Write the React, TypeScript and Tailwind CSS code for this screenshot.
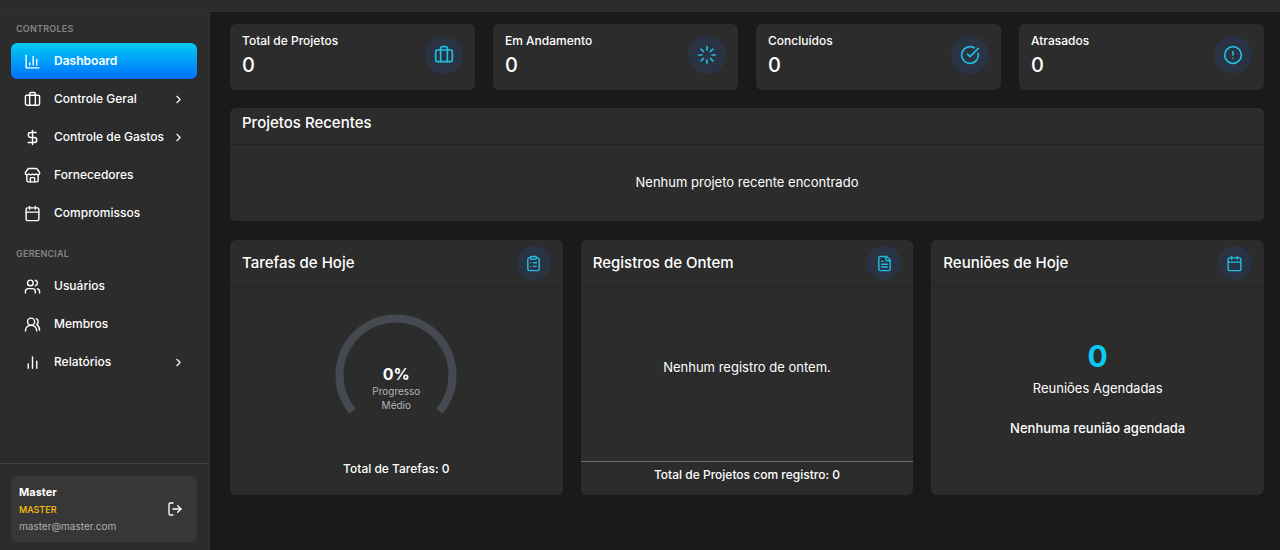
import type { ReactNode } from 'react';
import {
  Briefcase,
  Calendar,
  ChevronRight,
  CircleAlert,
  CircleCheckBig,
  ClipboardList,
  DollarSign,
  FileText,
  Loader,
  LogOut,
  Store,
  Users,
  UsersRound,
} from 'lucide-react';
import type { LucideIcon } from 'lucide-react';

type IconProps = { size?: number };

function StrokeIcon({ size = 17, children }: IconProps & { children: ReactNode }) {
  return (
    <svg
      width={size}
      height={size}
      viewBox="0 0 24 24"
      fill="none"
      stroke="currentColor"
      strokeWidth="2"
      strokeLinecap="round"
      strokeLinejoin="round"
    >
      {children}
    </svg>
  );
}

function ChartAxes(props: IconProps) {
  return (
    <StrokeIcon {...props}>
      <path d="M3 3v18h18M8 17v-3M13 17V5M18 17V9" />
    </StrokeIcon>
  );
}

function ChartBars(props: IconProps) {
  return (
    <StrokeIcon {...props}>
      <path d="M6 20v-6M12 20V4M18 20V10" />
    </StrokeIcon>
  );
}

type NavEntry = {
  label: string;
  icon: LucideIcon | typeof ChartAxes;
  active?: boolean;
  expandable?: boolean;
};

const controles: NavEntry[] = [
  { label: 'Dashboard', icon: ChartAxes, active: true },
  { label: 'Controle Geral', icon: Briefcase, expandable: true },
  { label: 'Controle de Gastos', icon: DollarSign, expandable: true },
  { label: 'Fornecedores', icon: Store },
  { label: 'Compromissos', icon: Calendar },
];

const gerencial: NavEntry[] = [
  { label: 'Usuários', icon: Users },
  { label: 'Membros', icon: UsersRound },
  { label: 'Relatórios', icon: ChartBars, expandable: true },
];

const stats = [
  { label: 'Total de Projetos', value: 0, icon: Briefcase },
  { label: 'Em Andamento', value: 0, icon: Loader },
  { label: 'Concluídos', value: 0, icon: CircleCheckBig },
  { label: 'Atrasados', value: 0, icon: CircleAlert },
];

const rowBase = 'flex h-9 w-full items-center rounded-md pl-[13px] pr-3 text-left text-[12px] text-white';

function NavItem({ label, icon: Icon, active, expandable }: NavEntry) {
  const content = (
    <>
      <Icon size={17} />
      <span className="ml-[13px] flex-1 whitespace-nowrap">{label}</span>
      {expandable && <ChevronRight size={13} />}
    </>
  );

  return (
    <li>
      {expandable ? (
        <button type="button" aria-expanded={false} className={`${rowBase} font-medium`}>
          {content}
        </button>
      ) : (
        <a
          href="#"
          aria-current={active ? 'page' : undefined}
          className={`${rowBase} ${active ? 'bg-linear-to-b from-[#0dcaf0] to-[#0d6efd] font-semibold' : 'font-medium'}`}
        >
          {content}
        </a>
      )}
    </li>
  );
}

function NavGroup({ title, items }: { title: string; items: NavEntry[] }) {
  return (
    <section>
      <h2 className="px-[5px] text-[9px] leading-3 font-semibold tracking-wide text-[#858585]">{title}</h2>
      <ul className="mt-2 flex flex-col gap-0.5">
        {items.map((item) => (
          <NavItem key={item.label} {...item} />
        ))}
      </ul>
    </section>
  );
}

function Sidebar() {
  return (
    <aside className="flex w-[210px] shrink-0 flex-col border-r border-[#303030] bg-[#2c2c2c]">
      <nav className="flex flex-1 flex-col gap-[17px] pt-[11px] pr-3 pl-[11px]">
        <NavGroup title="CONTROLES" items={controles} />
        <NavGroup title="GERENCIAL" items={gerencial} />
      </nav>
      <div className="border-t border-[#414141] pt-3 pr-3 pb-2 pl-[11px]">
        <div className="flex h-[66px] items-center justify-between rounded-md bg-[#373737] pr-3.5 pl-2">
          <div>
            <p className="text-[11px] leading-[17px] font-bold text-white">Master</p>
            <p className="text-[9px] leading-[17px] font-medium text-[#ffc107]">MASTER</p>
            <p className="text-[10px] leading-4 text-[#b0b0b0]">master@master.com</p>
          </div>
          <button type="button" aria-label="Sair" className="text-white">
            <LogOut size={16} />
          </button>
        </div>
      </div>
    </aside>
  );
}

function Card({ title, icon: Icon, children }: { title: string; icon: LucideIcon; children: ReactNode }) {
  return (
    <section className="flex h-[255px] flex-col rounded-md bg-[#2c2c2c]">
      <header className="flex h-[47px] shrink-0 items-center justify-between border-b border-[#242424] px-3">
        <h2 className="text-[15px] font-medium">{title}</h2>
        <span className="flex size-[34px] items-center justify-center rounded-full bg-[#293343] text-[#20bde0]">
          <Icon size={17} />
        </span>
      </header>
      {children}
    </section>
  );
}

function Gauge() {
  return (
    <div className="grid place-items-center">
      <svg width="122" height="122" viewBox="0 0 122 122" className="col-start-1 row-start-1">
        <path d="M17.7 97.3A56.5 56.5 0 1 1 104.3 97.3" fill="none" stroke="#454a51" strokeWidth="8" />
      </svg>
      <div className="col-start-1 row-start-1 pt-[26px] text-center">
        <p className="text-base leading-5 font-bold">0%</p>
        <p className="text-[10px] leading-[14px] text-[#adb5bd]">
          Progresso
          <br />
          Médio
        </p>
      </div>
    </div>
  );
}

export default function App() {
  return (
    <div className="flex h-screen flex-col bg-[#1a1a1a] font-[Inter,'Open_Sans',sans-serif] text-white">
      <div className="h-3 shrink-0 border-b border-[#303030] bg-[#2c2c2c]" />
      <div className="flex min-h-0 flex-1">
        <Sidebar />

        <main className="min-w-0 flex-1 pt-3 pr-4 pl-5">
          <div className="grid grid-cols-4 gap-[18px]">
            {stats.map(({ label, value, icon: Icon }) => (
              <section
                key={label}
                className="flex h-[66px] items-center justify-between rounded-md bg-[#2c2c2c] px-3 pb-1"
              >
                <div>
                  <h2 className="text-[12px] leading-5 font-medium">{label}</h2>
                  <p className="text-xl leading-7 font-medium">{value}</p>
                </div>
                <span className="flex size-[38px] items-center justify-center rounded-full bg-[#293343] text-[#20bde0]">
                  <Icon size={20} />
                </span>
              </section>
            ))}
          </div>

          <section className="mt-[18px] rounded-md bg-[#2c2c2c]">
            <header className="h-[37px] border-b border-[#242424] px-3 pt-[5px]">
              <h2 className="text-[15px] leading-5 font-medium">Projetos Recentes</h2>
            </header>
            <p className="flex h-[76px] items-center justify-center text-[13px]">Nenhum projeto recente encontrado</p>
          </section>

          <div className="mt-[19px] grid grid-cols-3 gap-[18px]">
            <Card title="Tarefas de Hoje" icon={ClipboardList}>
              <div className="flex flex-1 flex-col items-center justify-between pt-[27px] pb-4">
                <Gauge />
                <p className="text-[12px] leading-5 font-medium">Total de Tarefas: 0</p>
              </div>
            </Card>

            <Card title="Registros de Ontem" icon={FileText}>
              <p className="flex flex-1 items-center justify-center pb-3 text-[13px]">Nenhum registro de ontem.</p>
              <p className="border-t border-[#6b6b6b] pt-[3px] pb-2.5 text-center text-[12px] leading-5 font-medium">
                Total de Projetos com registro: 0
              </p>
            </Card>

            <Card title="Reuniões de Hoje" icon={Calendar}>
              <div className="flex flex-1 flex-col items-center justify-center pb-1.5 text-center">
                <p className="text-[30px] leading-9 font-bold text-[#0dcaf0]">0</p>
                <p className="mt-1 text-[13px] leading-5">Reuniões Agendadas</p>
                <p className="mt-5 text-[13px] leading-5 font-medium">Nenhuma reunião agendada</p>
              </div>
            </Card>
          </div>
        </main>
      </div>
    </div>
  );
}
